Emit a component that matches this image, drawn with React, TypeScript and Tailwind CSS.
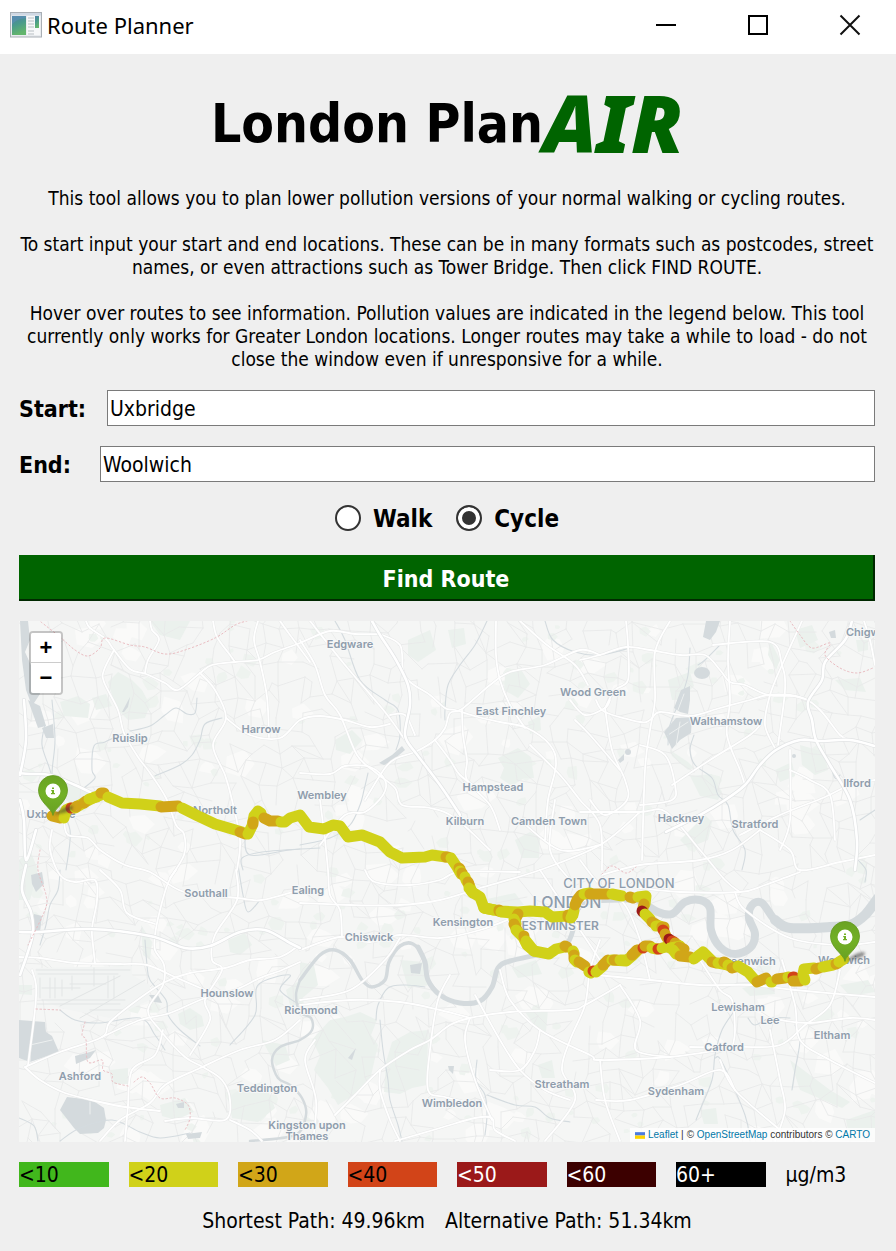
import React from "react";

type Pt = [number, number];

/* ---------- map geometry helpers ---------- */

const parse = (s: string): Pt[] =>
  s.trim().split(/\s+/).map((p) => p.split(",").map(Number) as Pt);

/** Smooth curve through the listed points (Catmull-Rom as cubic Béziers). */
function curve(s: string): string {
  const p = parse(s);
  let d = `M${p[0][0]} ${p[0][1]}`;
  for (let i = 0; i < p.length - 1; i++) {
    const a = p[i - 1] ?? p[i];
    const b = p[i];
    const c = p[i + 1];
    const e = p[i + 2] ?? c;
    d += `C${b[0] + (c[0] - a[0]) / 6} ${b[1] + (c[1] - a[1]) / 6} ${c[0] - (e[0] - b[0]) / 6} ${c[1] - (e[1] - b[1]) / 6} ${c[0]} ${c[1]}`;
  }
  return d;
}

function random(seed: number) {
  let s = seed;
  return () => {
    s = (s * 1664525 + 1013904223) % 4294967296;
    return s / 4294967296;
  };
}

/** Faint mesh of residential streets. */
function streets(): string {
  const rnd = random(11);
  const step = 17;
  const cols = 53;
  const rows = 33;
  const pts: Pt[][] = [];
  for (let r = 0; r < rows; r++) {
    pts.push([]);
    for (let c = 0; c < cols; c++) {
      pts[r].push([
        Math.round(10 + c * step + (rnd() - 0.5) * 15),
        Math.round(612 + r * step + (rnd() - 0.5) * 15),
      ]);
    }
  }
  let d = "";
  for (let r = 0; r < rows - 1; r++) {
    for (let c = 0; c < cols - 1; c++) {
      const [x, y] = pts[r][c];
      if (rnd() < 0.68) d += `M${x} ${y}L${pts[r][c + 1].join(" ")}`;
      if (rnd() < 0.68) d += `M${x} ${y}L${pts[r + 1][c].join(" ")}`;
      if (rnd() < 0.12) d += `M${x} ${y}L${pts[r + 1][c + 1].join(" ")}`;
    }
  }
  return d;
}

/** Small irregular patches scattered over the map. */
function patches(seed: number, count: number, size: number): string {
  const rnd = random(seed);
  let d = "";
  for (let i = 0; i < count; i++) {
    const x = 19 + rnd() * 856;
    const y = 621 + rnd() * 521;
    const n = 5 + Math.floor(rnd() * 3);
    const r = size * (0.35 + rnd() * 0.8);
    for (let k = 0; k < n; k++) {
      const a = (k / n) * Math.PI * 2;
      const q = r * (0.55 + rnd() * 0.6);
      d += `${k ? "L" : "M"}${(x + Math.cos(a) * q * 1.2).toFixed(1)} ${(y + Math.sin(a) * q).toFixed(1)}`;
    }
    d += "Z";
  }
  return d;
}

const STREETS = streets();
const LIGHT = patches(5, 170, 15);
const GREEN_SPOTS = patches(29, 230, 7);

const PARKS = [
  "108,682 118,672 132,680 142,690 150,705 145,718 128,720 116,708",
  "92,698 106,694 112,706 96,710",
  "60,702 78,696 90,704 88,718 64,716",
  "19,860 30,850 38,870 30,900 19,900",
  "60,780 82,786 96,800 84,812 66,800",
  "141,925 152,942 150,960 143,955",
  "178,1014 190,1008 202,1016 204,1026 190,1030 180,1024",
  "228,940 245,933 252,945 240,955 230,952",
  "286,990 300,980 304,1005 290,1005",
  "228,1098 245,1085 268,1090 275,1108 258,1122 232,1118",
  "262,1040 285,1045 290,1060 276,1066",
  "110,1070 128,1068 128,1084 114,1084",
  "160,1105 185,1098 194,1112 176,1120 162,1116",
  "312,1040 330,1020 345,1017 360,1012 377,1020 371,1035 378,1045 370,1080 352,1096 338,1105 328,1088 314,1070 320,1056",
  "392,1042 410,1032 428,1030 427,1085 412,1088 400,1094 384,1092 386,1062",
  "400,960 425,962 430,985 408,988",
  "300,962 314,965 318,985 300,1000",
  "487,899 515,893 524,905 490,909",
  "515,840 530,832 540,838 539,858 522,858",
  "498,758 518,748 531,757 534,778 524,778 512,786 500,778 504,768",
  "335,740 352,730 362,740 350,754 336,750",
  "505,675 520,668 530,684 518,698 504,690",
  "408,640 430,630 436,650 418,662 408,655",
  "448,630 464,628 466,644 452,648",
  "528,722 540,716 541,730 530,734",
  "512,968 536,960 542,974 518,978",
  "525,1012 548,1010 546,1032 535,1026",
  "538,1065 552,1060 555,1078 542,1078",
  "690,776 712,774 722,792 718,800 700,796",
  "670,750 688,762 694,768 688,770 672,756",
  "705,815 712,822 708,840 688,848 680,840",
  "668,680 690,672 694,686 680,700 672,700",
  "775,770 792,762 795,776 780,782",
  "800,745 824,752 828,770 815,775 802,765",
  "835,680 860,678 866,692 845,690",
  "856,640 868,640 868,650 858,652",
  "795,630 812,625 818,640 800,648",
  "742,988 772,982 775,994 750,996",
  "790,1060 830,1090 850,1102 842,1108 800,1090",
  "840,985 868,980 875,992 850,996",
  "846,1120 875,1110 875,1141 850,1141",
  "700,1110 716,1108 718,1124 704,1124",
  "770,640 780,660 776,670 768,655",
  "150,621 190,621 180,640 160,635",
  "19,985 32,985 32,995 19,994",
];

const LAKES = [
  "20,621 28,621 30,640 25,652 34,672 40,694 32,706 26,690 22,660",
  "28,700 40,706 46,726 38,728",
  "42,728 53,724 54,738 46,738",
  "31,875 42,872 44,884 36,892 32,884",
  "34,914 42,916 40,932 34,930",
  "19,1020 45,1022 46,1032 52,1036 59,1052 30,1062 19,1058",
  "60,1110 67,1097 92,1100 104,1108 106,1120 104,1128 98,1133 80,1134 74,1128",
  "75,1056 90,1052 96,1050 90,1058 76,1064",
  "122,712 130,697 128,707 124,712",
  "379,763 392,755 402,746 405,750 392,761 384,765",
  "706,621 720,621 716,632 710,640 703,637",
  "681,690 690,686 690,700 688,714 680,712 674,708",
  "664,732 676,718 692,717 691,733 680,740 672,749",
  "176,1104 184,1102 184,1108 178,1108",
  "186,1134 202,1132 200,1138 188,1139",
  "149,995 158,995 162,1003 154,1002",
  "829,632 835,630 836,638 831,638",
  "618,760 624,754 624,760 620,763",
  "448,1066 454,1066 453,1074 449,1070",
  "348,1058 356,1048 352,1060",
  "410,965 422,963 420,974 411,973",
];

const STREAMS = [
  "60,1141 80,1128 112,1120 140,1132 160,1138 190,1133",
  "52,700 55,740 52,775 56,800 70,830 66,870",
  "45,725 42,745 50,770 58,800",
  "130,731 150,726 165,715 176,708 187,714 195,713 197,698",
  "222,718 205,724 200,740 192,755 180,765 155,776",
  "124,733 105,742 94,746 92,770 95,778 84,788",
  "335,621 345,640 360,680 385,700 398,710 400,735 396,750",
  "487,621 475,645 460,665 448,685 445,710 445,720",
  "368,773 364,790 360,805 350,825 330,838 300,845",
  "545,621 553,640 575,652 600,655 630,648",
  "690,648 688,675 682,695 670,725 668,745",
  "694,735 690,750 695,765 712,778 718,795 728,805 733,830 745,850 742,870",
  "720,645 705,660 698,665",
  "238,865 243,895 248,912 260,900",
  "145,940 147,965 150,980 166,1000 168,1015 180,1030 200,1046",
  "60,1010 75,1020 100,1023 140,1018 155,1035 165,1050",
  "60,870 58,890 50,905 46,925 40,945",
  "380,1020 383,1050 388,1080 390,1100 398,1125 402,1141",
  "376,1020 378,1005 388,988 405,985 425,987",
  "477,1060 476,1080 485,1095 487,1115 485,1135",
  "487,1095 515,1105 535,1107 550,1118 570,1122",
  "735,1010 722,1030 715,1055 712,1080 700,1110 696,1120",
  "715,1058 722,1062 745,1115 750,1141",
  "795,1025 800,1040 795,1070 792,1090",
  "748,1018 755,1025 770,1018 790,1018",
  "816,740 828,760 835,778 840,775",
  "245,835 250,855 290,850 320,848",
  "243,870 242,858 262,852 300,849",
  "860,820 875,810",
  "858,860 866,870 865,882",
  "19,1118 34,1126 38,1141",
  "300,1005 280,990 290,975 258,985 255,1015 230,1045",
];

const ROADS = [
  "86,621 90,628 106,639 114,650 130,669 146,674 165,683 178,690 200,673 212,665 235,662 258,660 275,652 300,643 330,631 355,634 380,634",
  "150,621 152,630 159,640 148,660 145,673",
  "114,650 104,670 104,682 118,710 124,733 138,757 150,773 166,798 176,825 184,834 184,855 170,878",
  "213,621 217,637 230,655 235,662",
  "258,621 254,640 260,662 267,697 269,737",
  "200,673 215,690 226,718 213,745 225,775 232,800 240,840 237,870",
  "226,718 250,735 280,738 300,720 320,716 345,720 370,727 390,724",
  "280,621 290,635 310,662",
  "310,621 345,665 385,712 405,740",
  "52,830 50,850 60,875 75,882 95,880 97,900 92,928 93,945 95,963",
  "64,821 68,835 88,838 100,850 125,865 150,872 184,892 237,898 262,900 300,890",
  "100,870 120,890 127,913 155,924",
  "176,870 168,883 160,910 155,935 155,950 164,965 163,985 148,1010 160,1030 185,1057 203,1067 222,1080 230,1100 225,1120 190,1118 165,1121",
  "19,957 40,958 75,963 120,964 147,965 175,977 205,990",
  "25,1067 60,1052 102,1037 110,1022 140,998 165,982 190,973 225,968 250,960 280,957 298,946",
  "102,1037 140,1020 170,1013 205,998 235,990 260,978 282,970 300,962",
  "25,1067 40,1080 65,1093 100,1102 125,1107 160,1111",
  "100,1141 120,1120 150,1103 165,1085 200,1068 240,1050 275,1040 300,1020",
  "236,870 237,900 215,935 212,960 222,970 205,1000 210,1020 190,1055",
  "32,970 36,985 35,1010 28,1065",
  "230,1120 250,1130 262,1141",
  "128,1105 132,1070 155,1055 163,1030",
  "125,1141 128,1105",
  "380,634 400,645 403,670 410,682 430,695 445,708 455,710 478,717 500,722 527,728 550,745 556,765 548,800 545,840",
  "365,800 385,768 397,758 415,752 435,740 445,728 450,713 462,709 490,685 510,672 545,665 580,650 600,655",
  "300,640 315,665 325,695 340,715 357,755 375,772 395,788 402,805 430,808 455,818 490,850",
  "496,621 496,655 500,680 510,705 525,728",
  "520,621 547,645 575,665 588,685",
  "462,710 463,735 467,760 467,780 490,805 500,830",
  "415,735 405,715 390,715",
  "435,740 450,760 460,775 480,790",
  "300,773 330,774 345,766 370,767 385,780 383,795 365,812 345,815 320,845",
  "300,903 350,905 400,905 440,900 480,888 540,870 600,845 640,812",
  "320,800 325,840 328,870 330,895 340,910 342,937",
  "300,950 340,937 370,942 400,935 440,938 480,930 520,915",
  "365,870 375,882 410,885 440,880 460,872 520,872",
  "300,1000 350,990 385,960 400,938",
  "300,1005 350,1000 400,1002 440,1010 470,1018",
  "335,1115 355,1095 380,1070 410,1050 430,1040 450,1025 470,1018 510,1012 570,1010 585,1005 620,985",
  "450,975 438,1000 430,1050 428,1090 445,1097 480,1105",
  "313,1141 316,1100 305,1060 315,1040",
  "380,1070 380,1090 390,1120 400,1141",
  "470,1018 465,1040 475,1080 492,1120",
  "475,995 500,1040 520,1070 545,1090 570,1100",
  "500,970 510,1000 540,1030 590,1055 600,1060 670,1057 720,1050",
  "545,1141 575,1100 562,1070 570,1040 585,1005 590,970 600,940",
  "395,1141 440,1128 475,1118 492,1118 495,1130 515,1141",
  "490,1070 520,1070 535,1050 540,1030",
  "580,660 600,655 626,647 650,650 680,655 705,655 720,670 730,682 745,685 768,695 800,697 820,710 840,735 850,740",
  "596,700 605,712 640,722 650,720 660,712 690,716 720,708 750,700 768,695 790,695 808,700",
  "570,700 585,715 605,708 610,700",
  "530,745 560,775 580,800 600,825 602,870",
  "620,770 590,735 575,720",
  "626,621 628,645 628,680 615,690 605,708",
  "670,621 655,652 655,700 650,730 645,770 642,860",
  "605,708 612,750 625,780 627,800 605,815 590,800",
  "730,621 728,660 730,700 727,735 740,770 745,785",
  "802,621 782,665 770,695 765,725 776,750",
  "713,645 770,642 782,665 785,690 778,745",
  "790,750 790,820 780,850",
  "790,770 810,780 830,795 835,840",
  "740,835 780,815 825,797 850,785 875,780",
  "602,875 640,865 700,860 732,850 760,830",
  "640,745 665,755 675,785 672,800 640,805",
  "672,785 710,760 750,735 760,725",
  "864,621 870,640 875,665",
  "580,812 640,812 666,812 700,850 725,880 740,892",
  "640,888 680,892 740,892 765,885 800,872",
  "735,892 745,910 790,938 840,945 875,942",
  "760,830 790,850 800,870 840,862 875,855",
  "596,975 650,980 700,985 750,985 795,990 875,997",
  "700,960 720,990 732,1000 735,1030 733,1045",
  "690,1047 740,1047 780,1045 805,1025 830,1005 840,970",
  "780,1020 810,1023 850,1018 875,1020",
  "782,960 795,1005 800,1040 830,1060 875,1083",
  "720,1060 735,1090 780,1130",
  "770,1030 780,1080 785,1110 775,1141",
  "596,1100 630,1100 680,1085 720,1070 735,1090",
  "600,1060 605,1100 620,1141",
  "620,985 640,1020 636,1050 670,1057",
  "580,860 600,885 625,905 640,940 650,980",
  "540,870 560,900 580,930 600,960",
  "555,800 550,850 570,880",
  "520,820 560,850 600,845",
];

const MOTORWAYS = [
  "19,773 30,774 50,775 75,785 100,797",
  "24,700 26,740 20,775",
  "26,865 22,890 31,912 33,932 28,952 20,975",
  "19,932 40,932 90,929 150,936 185,948 210,946 240,932 265,930 290,943 300,948",
  "372,621 380,635 396,660 408,685 410,705 405,735 415,752",
  "415,752 440,785 460,815",
  "852,621 845,640 825,662 822,680 808,702 812,720 816,740 830,765 850,800 857,840 855,870",
  "666,832 700,815 725,800 745,785 760,765 776,750 800,740 820,741 850,740 875,746",
  "36,830 26,860 24,820 20,800",
];

const BOUNDARIES = [
  "41,622 60,637 75,650 88,656 100,648 105,638 130,645 145,647 165,654 185,650 215,638 235,625 247,621",
  "40,850 38,870 46,895 45,910 28,945",
  "36,1009 60,1010",
  "85,1022 82,1035 86,1040 88,1062 102,1060 103,1070 112,1074 113,1082 128,1086",
  "134,1082 142,1077 150,1083 160,1098 175,1098 188,1105 190,1118 185,1130",
  "790,621 800,635 812,648 830,643 825,655 840,668 857,673 873,668",
  "602,874 612,866 626,873 636,867",
];

const LABELS: [string, number, number][] = [
  ["Edgware", 350, 648],
  ["Wood Green", 593, 696],
  ["East Finchley", 511, 715],
  ["Walthamstow", 726, 725],
  ["Ruislip", 130, 742],
  ["Harrow", 261, 733],
  ["Wembley", 322, 799],
  ["Hampstead", 493, 791],
  ["Ilford", 857, 787],
  ["Northolt", 215, 814],
  ["Kilburn", 465, 825],
  ["Camden Town", 549, 825],
  ["Hackney", 681, 822],
  ["Stratford", 755, 828],
  ["Uxbridge", 51, 818],
  ["Southall", 206, 897],
  ["Ealing", 308, 894],
  ["Kensington", 463, 926],
  ["Chiswick", 369, 941],
  ["Greenwich", 747, 965],
  ["Woolwich", 844, 964],
  ["Hounslow", 227, 997],
  ["Richmond", 311, 1014],
  ["Lewisham", 738, 1011],
  ["Lee", 770, 1024],
  ["Eltham", 832, 1039],
  ["Catford", 724, 1051],
  ["Ashford", 80, 1080],
  ["Teddington", 267, 1092],
  ["Streatham", 562, 1088],
  ["Wimbledon", 452, 1107],
  ["Sydenham", 676, 1095],
];

const YELLOW = "#d0d119";
const AMBER = "#d1a618";
const RED = "#d24418";
const DARK = "#9b1919";

const ROUTE: [string, string][] = [
  [AMBER, "52,816 60,818 66,812"],
  [YELLOW, "64,818 66,810 70,808"],
  [RED, "71,808 72,808"],
  [YELLOW, "75,808 80,805 87,801 95,797 101,795"],
  [AMBER, "76,807 77,806"],
  [AMBER, "84,803 86,801"],
  [YELLOW, "89,799 97,797"],
  [AMBER, "101,793 104,793"],
  [YELLOW, "108,797 122,803 140,804 160,806"],
  [AMBER, "161,807 178,806"],
  [YELLOW, "182,808 198,816 215,824 232,829 242,832"],
  [AMBER, "240,832 245,834"],
  [YELLOW, "248,834 252,826 254,816 258,811 261,813"],
  [AMBER, "253,824 253,822"],
  [AMBER, "264,818 270,821 278,821"],
  [YELLOW, "281,822 285,822 290,818 300,815 309,827 324,829 333,825 340,826 348,837 362,835 380,842 390,852 402,858 425,857 432,855 446,857"],
  [AMBER, "446,857 448,857"],
  [YELLOW, "451,858 457,867 461,874"],
  [AMBER, "459,868 460,869"],
  [YELLOW, "460,871 461,872"],
  [AMBER, "462,873 463,875"],
  [YELLOW, "465,877 466,880 470,887 472,892 480,897 484,908 494,910"],
  [AMBER, "468,882 469,884"],
  [YELLOW, "469,888 473,893"],
  [YELLOW, "484,908 500,911 518,912 530,911 545,912 552,917 568,916"],
  [AMBER, "499,910 499,911"],
  [YELLOW, "501,912 512,913"],
  [AMBER, "516,918 518,914"],
  [YELLOW, "514,919 516,924"],
  [AMBER, "514,924 517,930"],
  [YELLOW, "516,930 523,937 527,945 534,951 549,954 556,949 565,947"],
  [AMBER, "524,936 524,937"],
  [YELLOW, "526,941 534,951"],
  [AMBER, "565,946 567,947"],
  [YELLOW, "573,951 574,953"],
  [AMBER, "574,955 574,959"],
  [YELLOW, "575,960 577,962"],
  [AMBER, "579,962 585,966"],
  [YELLOW, "589,972 591,973"],
  [RED, "593,971 594,971"],
  [YELLOW, "596,972 603,966"],
  [AMBER, "603,965 608,960"],
  [YELLOW, "612,960 626,961 632,956 638,950"],
  [AMBER, "614,960 617,960"],
  [YELLOW, "620,960 627,960"],
  [AMBER, "632,955 637,950"],
  [RED, "643,948 644,947"],
  [AMBER, "645,946 650,946"],
  [YELLOW, "652,948 657,949"],
  [RED, "658,949 659,949"],
  [YELLOW, "662,948 670,946"],
  [YELLOW, "568,917 573,915"],
  [AMBER, "568,915 568,917"],
  [YELLOW, "571,918 574,911"],
  [AMBER, "575,905 577,900 581,895"],
  [YELLOW, "584,894 590,893"],
  [AMBER, "590,894 608,894"],
  [YELLOW, "612,894 622,896"],
  [AMBER, "630,897 633,898"],
  [YELLOW, "638,897 646,896 645,904"],
  [AMBER, "644,904 643,908"],
  [DARK, "642,911 643,912"],
  [YELLOW, "645,914 650,919"],
  [AMBER, "652,922 657,925"],
  [YELLOW, "656,926 660,926"],
  [AMBER, "662,927 664,927"],
  [RED, "663,930 664,931"],
  [AMBER, "665,934 667,938"],
  [DARK, "669,939 670,940"],
  [RED, "672,941 674,942"],
  [AMBER, "675,943 679,946"],
  [YELLOW, "670,948 676,947 680,946"],
  [AMBER, "679,947 684,949"],
  [YELLOW, "673,950 676,954"],
  [AMBER, "680,956 690,957"],
  [YELLOW, "694,959 703,952 712,961"],
  [AMBER, "712,962 716,963"],
  [YELLOW, "718,963 728,965"],
  [AMBER, "724,962 726,963"],
  [YELLOW, "728,965 730,966"],
  [AMBER, "732,968 736,967"],
  [YELLOW, "738,966 748,972 755,980"],
  [AMBER, "757,982 766,978"],
  [YELLOW, "771,982 772,982"],
  [AMBER, "777,979 785,978"],
  [YELLOW, "788,977 789,977"],
  [RED, "793,977 794,977"],
  [AMBER, "793,981 800,981"],
  [YELLOW, "805,980 803,974 804,969 814,968"],
  [AMBER, "816,969 819,968"],
  [YELLOW, "823,967 833,965"],
  [AMBER, "836,964 838,963"],
  [YELLOW, "839,962 844,959"],
];

function Pin({ x, y }: { x: number; y: number }) {
  return (
    <g transform={`translate(${x} ${y})`}>
      <path d="M0 0C6-4 10-8 18-9C22-9 20-5 14-3Z" fill="#333" opacity="0.55" filter="url(#soft)" />
      <path
        d="M0 0C-1.500-7-14.500-13-14.500-25A14.500 14.500 0 0 1 14.500-25C14.500-13 1.500-7 0 0Z"
        fill="url(#pin)"
        stroke="#62981f"
        strokeWidth="0.8"
      />
      <circle cy="-24" r="7.500" fill="#fff" />
      <path d="M-1.800-25H1V-22H2V-20.700H-2V-22H-1V-23.700H-1.800ZM-1-27.500H1V-26H-1Z" fill="#72af26" />
    </g>
  );
}

function MapCanvas() {
  return (
    <svg
      viewBox="19 621 856 521"
      className="block h-auto w-full bg-[#f5f6f5]"
      role="img"
      aria-label="Map of London with the route"
      fill="none"
      strokeLinecap="round"
      strokeLinejoin="round"
    >
      <defs>
        <linearGradient id="pin" x1="0" x2="0" y1="0" y2="1">
          <stop offset="0" stopColor="#6aa323" />
          <stop offset="0.500" stopColor="#72b026" />
          <stop offset="1" stopColor="#68a022" />
        </linearGradient>
        <filter id="soft" x="-50%" y="-50%" width="200%" height="200%">
          <feGaussianBlur stdDeviation="1.500" />
        </filter>
      </defs>

      <path d={LIGHT} fill="#fafaf9" />
      <path d={GREEN_SPOTS} fill="#eef3ef" />
      {PARKS.map((p) => (
        <polygon key={p} points={p} fill="#ebf1ed" />
      ))}
      <path d={STREETS} stroke="#e9eaea" strokeWidth="0.9" />

      {/* Heathrow airfield */}
      <path d="M36 968 132 966 132 975 150 985 150 1000 110 1018 60 1008 36 996Z" fill="#f2f4f3" />
      <path
        d="M36 970H130M38 974H118M42 1000H125M36 1004H120M40 978V998M50 978V998M55 978V998M62 980V996M72 976V990M108 976V998M114 976V998M60 1006 120 976M80 1018 145 980M70 984H106M42 988H80M90 1010H125M94 968V986"
        stroke="#e2e5e5"
        strokeWidth="1"
      />

      {LAKES.map((p) => (
        <polygon key={p} points={p} fill="#d4dadd" />
      ))}
      <ellipse cx="702" cy="673" rx="8" ry="6" fill="#d4dadd" />
      <ellipse cx="628" cy="752" rx="3" ry="3" fill="#d4dadd" />
      <ellipse cx="794" cy="756" rx="2" ry="2" fill="#d4dadd" />
      <path d="M30 1045 52 1040M31 1045 30 1062M90 1102V1114M668 735 688 722M676 746 680 722M684 694 678 710" stroke="#edf0f0" strokeWidth="1" />

      {STREAMS.map((s) => (
        <path key={s} d={curve(s)} stroke="#d4dbdf" strokeWidth="1.100" />
      ))}
      <g stroke="#d4dadd">
        <path d={curve("250,1141 295,1135 306,1115 302,1098 290,1085 278,1078 272,1060 280,1047 300,1040 312,1030 311,1018 300,1012 296,995 300,980")} strokeWidth="2.500" />
        <path d={curve("300,980 320,955 335,950 350,960 362,980 372,987 385,980 389,962 400,946 413,944 423,957 428,980 440,995")} strokeWidth="3.500" />
        <path d={curve("418,947 425,962 428,980 440,995 460,1003 480,1001 492,987 498,968 510,961 545,953 565,946 573,930 573,915 590,902 630,900 645,903")} strokeWidth="5" />
        <path d={curve("640,901 658,912 672,914 685,902 700,900 710,908 711,930 720,947 735,954 750,948 755,934 749,918 752,905 762,903 775,920 790,928 830,927 850,925")} strokeWidth="8" />
        <path d={curve("775,920 790,928 830,927 850,925 865,915 878,898")} strokeWidth="10" />
      </g>

      {ROADS.map((r) => (
        <path key={r} d={curve(r)} stroke="#e8e9e9" strokeWidth="2.800" />
      ))}
      {ROADS.map((r) => (
        <path key={r} d={curve(r)} stroke="#fff" strokeWidth="1.800" />
      ))}
      {MOTORWAYS.map((r) => (
        <path key={r} d={curve(r)} stroke="#e2e4e5" strokeWidth="4" />
      ))}
      {MOTORWAYS.map((r) => (
        <path key={r} d={curve(r)} stroke="#fff" strokeWidth="2.600" />
      ))}
      {BOUNDARIES.map((b) => (
        <path key={b} d={curve(b)} stroke="#e9bcc1" strokeWidth="1" strokeDasharray="1.500 2.500" />
      ))}

      <g
        fill="#8f9dac"
        stroke="#f7f8f8"
        strokeWidth="2"
        paintOrder="stroke"
        textAnchor="middle"
        className="font-['Inter','Noto_Sans',sans-serif] font-semibold"
        fontSize="11"
      >
        {LABELS.map(([name, x, y]) => (
          <text key={name} x={x} y={y}>
            {name}
          </text>
        ))}
        <text>
          <tspan x="307" y="1129">
            Kingston upon
          </tspan>
          <tspan x="307" y="1140">
            Thames
          </tspan>
        </text>
        <text x="846" y="636" textAnchor="start">
          Chigwell
        </text>
        <text x="619" y="888" fontSize="13" fontWeight="500">
          CITY OF LONDON
        </text>
        <text x="567" y="908" fontSize="16" fontWeight="500">
          LONDON
        </text>
        <text x="554" y="930" fontSize="12">
          WESTMINSTER
        </text>
      </g>

      {ROUTE.map(([color, pts], i) => (
        <polyline key={i} points={pts} stroke={color} strokeWidth="11" />
      ))}

      <Pin x={53} y={815} />
      <Pin x={845} y={961} />
    </svg>
  );
}

/* ---------- window ---------- */

const LEGEND = [
  { label: "<10", style: "bg-[#41b71c] text-black" },
  { label: "<20", style: "bg-[#d0d119] text-black" },
  { label: "<30", style: "bg-[#d1a618] text-black" },
  { label: "<40", style: "bg-[#d24418] text-black" },
  { label: "<50", style: "bg-[#9b1919] text-white" },
  { label: "<60", style: "bg-[#3c0000] text-white" },
  { label: "60+", style: "bg-black text-white" },
];

function AppIcon() {
  return (
    <svg width="32" height="26" viewBox="0 0 32 26" aria-hidden="true">
      <defs>
        <linearGradient id="pane" x1="0" x2="0.300" y1="0" y2="1">
          <stop offset="0" stopColor="#4d7fa8" />
          <stop offset="0.500" stopColor="#4a9a8c" />
          <stop offset="1" stopColor="#62b56c" />
        </linearGradient>
      </defs>
      <rect x="0.500" y="0.500" width="31" height="24.500" fill="#e9ecef" stroke="#a9afb5" />
      <rect x="1" y="1" width="30" height="2.500" fill="#cfd8e4" />
      <rect x="2" y="4" width="14" height="19" fill="url(#pane)" />
      <path d="M2 13C5 8 10 7 16 6V4H2Z" fill="#5b8fb4" opacity="0.700" />
      <rect x="17" y="4" width="13" height="19" fill="#f7f8f9" />
      <path d="M18 6H24M18 9H24M18 12H24M18 15H24M18 19H24M18 22H24" stroke="#cdd1d5" strokeWidth="1.300" />
      <rect x="25" y="4" width="4" height="12" fill="url(#pane)" />
    </svg>
  );
}

export default function App() {
  return (
    <div className="min-h-screen bg-[#efefef] font-['DejaVu_Sans_Condensed','Noto_Sans',sans-serif] text-black">
      <header className="flex h-[54px] items-center bg-white pr-[34px] pb-1 pl-[10px]">
        <AppIcon />
        <span className="ml-[5px] font-['Noto_Sans',sans-serif] text-[22px] leading-8">Route Planner</span>
        <div className="ml-auto flex gap-[68px]">
          <button type="button" aria-label="Minimize" className="size-6">
            <svg viewBox="0 0 24 24" stroke="#000" strokeWidth="2">
              <path d="M2 12H22" />
            </svg>
          </button>
          <button type="button" aria-label="Maximize" className="size-6">
            <svg viewBox="0 0 24 24" fill="none" stroke="#000" strokeWidth="2">
              <rect x="3" y="3" width="18" height="18" />
            </svg>
          </button>
          <button type="button" aria-label="Close" className="size-6">
            <svg viewBox="0 0 24 24" stroke="#111" strokeWidth="2">
              <path d="M2.500 2.500 21.500 21.500M21.500 2.500 2.500 21.500" />
            </svg>
          </button>
        </div>
      </header>

      <main className="pt-[18px] pr-[21px] pl-[19px]">
        <h1 className="flex h-[100px] items-center justify-center font-bold">
          <span className="pt-1 text-[53px]">London Plan</span>
          <span className="font-['Noto_Sans',sans-serif] text-[80px] font-black text-[#006400] italic">AIR</span>
        </h1>

        <div className="mt-[15px] space-y-[23px] text-center text-[19px] leading-[23px]">
          <p>This tool allows you to plan lower pollution versions of your normal walking or cycling routes.</p>
          <p>
            To start input your start and end locations. These can be in many formats such as postcodes, street
            names, or even attractions such as Tower Bridge. Then click FIND ROUTE.
          </p>
          <p>
            Hover over routes to see information. Pollution values are indicated in the legend below. This tool
            currently only works for Greater London locations. Longer routes may take a while to load - do not
            close the window even if unresponsive for a while.
          </p>
        </div>

        <form onSubmit={(e) => e.preventDefault()}>
          <div className="mt-[19px] flex items-center">
            <label htmlFor="start" className="w-[88px] pt-[2px] text-[23px] leading-8 font-bold">
              Start:
            </label>
            <input
              id="start"
              type="text"
              defaultValue="Uxbridge"
              className="h-9 min-w-0 flex-1 border border-[#7a7a7a] bg-white px-[2px] pt-[2px] text-[21px]"
            />
          </div>
          <div className="mt-5 flex items-center">
            <label htmlFor="end" className="w-[81px] pt-[2px] text-[23px] leading-8 font-bold">
              End:
            </label>
            <input
              id="end"
              type="text"
              defaultValue="Woolwich"
              className="h-9 min-w-0 flex-1 border border-[#7a7a7a] bg-white px-[2px] pt-[2px] text-[21px]"
            />
          </div>

          <div className="mt-5 flex h-8 items-center justify-center gap-6 text-[24px] font-bold">
            <label className="flex items-center gap-3">
              <input
                type="radio"
                name="mode"
                value="walk"
                className="size-[26px] appearance-none rounded-full border-2 border-[#333] bg-white checked:bg-[#333] checked:shadow-[inset_0_0_0_4px_white]"
              />
              <span className="pt-[2px]">Walk</span>
            </label>
            <label className="flex items-center gap-3">
              <input
                type="radio"
                name="mode"
                value="cycle"
                defaultChecked
                className="size-[26px] appearance-none rounded-full border-2 border-[#333] bg-white checked:bg-[#333] checked:shadow-[inset_0_0_0_4px_white]"
              />
              <span className="pt-[2px]">Cycle</span>
            </label>
          </div>

          <button
            type="submit"
            className="mt-[21px] block h-[46px] w-full border-r-2 border-b-2 border-[#002800] bg-[#006400] pt-1 text-[23px] font-bold text-white"
          >
            Find Route
          </button>
        </form>

        <section className="relative mt-5 overflow-hidden">
          <MapCanvas />
          <div className="absolute top-[10px] left-[10px] flex flex-col overflow-hidden rounded border-2 border-black/20 bg-clip-padding font-['Liberation_Sans',sans-serif] text-[22px] leading-[30px] font-bold">
            <button type="button" aria-label="Zoom in" className="h-[30px] w-[30px] border-b border-[#ccc] bg-white">
              +
            </button>
            <button type="button" aria-label="Zoom out" className="h-[30px] w-[30px] bg-white">
              −
            </button>
          </div>
          <div className="absolute right-0 bottom-0 flex items-center gap-[3px] bg-white/80 px-[5px] font-['Liberation_Sans',sans-serif] text-[10px] leading-[14px] text-[#333]">
            <svg width="10" height="7" viewBox="0 0 12 8" aria-hidden="true">
              <path d="M0 0H12V4H0Z" fill="#4C7BE1" />
              <path d="M0 4H12V8H0Z" fill="#FFD500" />
            </svg>
            <a href="#leaflet" className="text-[#0078a8]">Leaflet</a>
            <span>|</span>
            <span>
              © <a href="#osm" className="text-[#0078a8]">OpenStreetMap</a> contributors ©{" "}
              <a href="#carto" className="text-[#0078a8]">CARTO</a>
            </span>
          </div>
        </section>

        <div className="mt-5 grid grid-cols-8 gap-5 text-[21px] leading-[23px]">
          {LEGEND.map(({ label, style }) => (
            <span key={label} className={`pt-[2px] ${style}`}>
              {label}
            </span>
          ))}
          <span className="pt-[2px]">µg/m3</span>
        </div>

        <div className="mt-5 flex justify-center gap-5 pb-4 text-[21px] leading-7">
          <span>Shortest Path: 49.96km</span>
          <span>Alternative Path: 51.34km</span>
        </div>
      </main>
    </div>
  );
}
